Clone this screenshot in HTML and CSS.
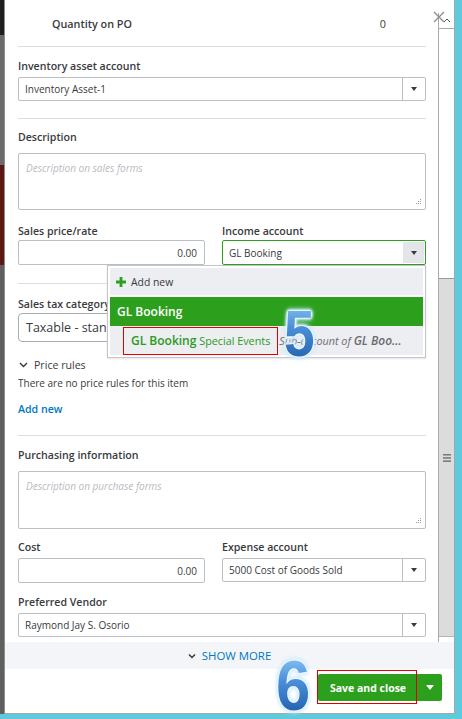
FILE: index.html
```html
<!DOCTYPE html>
<html>
<head>
<meta charset="utf-8">
<link rel="stylesheet" href="styles.css">
</head>
<body>
<div class="screen">
  <div class="main">
    <div class="bg-left">
      <div class="bl bl1"></div><div class="bl bl2"></div><div class="bl bl3"></div><div class="bl bl4"></div>
    </div>
    <div class="panel">
      <div class="scroller">
        <div class="form">
          <div class="qty"><span class="qty-label">Quantity on PO</span><span class="qty-val">0</span></div>

          <div class="sec sec-inv">
            <div class="label">Inventory asset account</div>
            <div class="select sel-inv"><span class="sel-text">Inventory Asset-1</span><span class="sel-arrow"><i class="caret"></i></span></div>
          </div>

          <div class="sec sec-desc">
            <div class="label">Description</div>
            <div class="textarea ta-sales"><span class="ph">Description on sales forms</span><svg class="grip" width="8" height="7" viewBox="0 0 8 7"><g fill="#9a9a9a"><rect x="6" y="0" width="1" height="1"/><rect x="4" y="2" width="1" height="1"/><rect x="6" y="2" width="1" height="1"/><rect x="2" y="4" width="1" height="1"/><rect x="4" y="4" width="1" height="1"/><rect x="6" y="4" width="1" height="1"/></g></svg></div>
            <div class="grid2 row-price">
              <div>
                <div class="label">Sales price/rate</div>
                <div class="input num">0.00</div>
              </div>
              <div>
                <div class="label">Income account</div>
                <div class="select sel-active"><span class="sel-text">GL Booking</span><span class="sel-arrow grey"><i class="caret"></i></span></div>
              </div>
            </div>
          </div>

          <div class="sec sec-tax">
            <div class="label">Sales tax category</div>
            <div class="taxsel">Taxable - standard rate</div>
            <div class="rules-head"><svg width="9" height="6" viewBox="0 0 9 6"><polyline points="1,1 4.5,4.5 8,1" fill="none" stroke="#393a3d" stroke-width="1.4"/></svg><span>Price rules</span></div>
            <div class="rules-none">There are no price rules for this item</div>
            <div class="link">Add new</div>
          </div>

          <div class="sec sec-purch">
            <div class="label">Purchasing information</div>
            <div class="textarea ta-purch"><span class="ph">Description on purchase forms</span><svg class="grip" width="8" height="7" viewBox="0 0 8 7"><g fill="#9a9a9a"><rect x="6" y="0" width="1" height="1"/><rect x="4" y="2" width="1" height="1"/><rect x="6" y="2" width="1" height="1"/><rect x="2" y="4" width="1" height="1"/><rect x="4" y="4" width="1" height="1"/><rect x="6" y="4" width="1" height="1"/></g></svg></div>
            <div class="grid2 row-cost">
              <div>
                <div class="label">Cost</div>
                <div class="input num">0.00</div>
              </div>
              <div>
                <div class="label">Expense account</div>
                <div class="select"><span class="sel-text">5000 Cost of Goods Sold</span><span class="sel-arrow"><i class="caret"></i></span></div>
              </div>
            </div>
            <div class="label lbl-vendor">Preferred Vendor</div>
            <div class="select"><span class="sel-text">Raymond Jay S. Osorio</span><span class="sel-arrow"><i class="caret"></i></span></div>
          </div>
        </div>
        <div class="scrollbar">
          <div class="sb-up"><svg width="8" height="5" viewBox="0 0 8 5"><polyline points="1,4 4,1 7,4" fill="none" stroke="#555" stroke-width="1"/></svg></div>
          <div class="sb-track"></div>
          <div class="sb-thumb"><svg width="8" height="8" viewBox="0 0 8 8"><g fill="#777"><rect x="0" y="0" width="8" height="1.5"/><rect x="0" y="3.2" width="8" height="1.5"/><rect x="0" y="6.4" width="8" height="1.5"/></g></svg></div>
        </div>
      </div>
      <div class="showmore"><svg width="8" height="6" viewBox="0 0 8 6"><polyline points="1,1.5 4,4.5 7,1.5" fill="none" stroke="#393a3d" stroke-width="1.5"/></svg><span>SHOW MORE</span></div>
      <div class="footer">
        <div class="btn-group"><span class="btn-main">Save and close</span><span class="btn-caret"><i class="caret white"></i></span></div>
      </div>

      <svg class="close-x" width="12" height="12" viewBox="0 0 12 12"><path d="M1 1 L11 11 M11 1 L1 11" stroke="#8f8f8f" stroke-width="1.4"/></svg>

      <div class="dropdown">
        <div class="dd-row dd-add"><svg width="10" height="10" viewBox="0 0 10 10"><path d="M3.6 0h2.8v3.6H10v2.8H6.4V10H3.6V6.4H0V3.6h3.6z" fill="#2ca01c"/></svg><span>Add new</span></div>
        <div class="dd-row dd-sel">GL Booking</div>
        <div class="dd-row dd-sub"><span class="sub-name"><b>GL Booking</b> Special Events</span><span class="sub-of">Sub-account of <b>GL Boo…</b></span></div>
      </div>
      <div class="redbox rb-sub"></div>
      <div class="redbox rb-save"></div>
      <div class="step step5">5</div>
    </div>
    <div class="bg-right"></div>
  </div>
  <div class="bg-bottom"></div>
  <div class="step step6">6</div>
</div>
</body>
</html>
```

FILE: styles.css
```css
* { box-sizing: border-box; }
html, body { margin: 0; padding: 0; }
body {
  width: 462px; height: 719px; overflow: hidden;
  background: #5ccbdb;
  font-family: "Open Sans", Lato, sans-serif;
  color: #393a3d;
}
.screen { position: relative; display: flex; flex-direction: column; height: 719px; }
.main { display: flex; height: 714px; }
.bg-left { width: 4px; display: flex; flex-direction: column; }
.bl1 { height: 35px; background: #1e1e1e; }
.bl2 { height: 130px; background: #6b6b6b; }
.bl3 { height: 100px; background: #5e1814; }
.bl4 { flex: 1; background: #5f5f5f; }
.bg-right { flex: 1; background: #5ccbdb; }
.bg-bottom { height: 5px; background: #5ccbdb; }

.panel {
  width: 451px; position: relative; background: #fff;
  border-left: 1px solid #8e8e8e; border-right: 1px solid #a6a6a6; border-bottom: 1px solid #a6a6a6;
  display: flex; flex-direction: column;
}
.scroller { display: flex; height: 642px; flex: none; }
.form { width: 433px; padding: 0 12px 0 13px; }

.qty {
  height: 47px; display: flex; justify-content: space-between; align-items: center;
  padding: 0 40px 0 34px; border-bottom: 1px solid #dcdde0; font-size: 10.8px;
}
.qty-label { font-weight: 600; }

.sec { border-bottom: 1px solid #dcdde0; }
.label { font-size: 10.6px; line-height: 14px; font-weight: 600; color: #393a3d; white-space: nowrap; }

.select, .input {
  height: 24px; border: 1px solid #babec5; border-radius: 2px;
  display: flex; align-items: center; font-size: 10px; background: #fff;
}
.input { height: 25px; }
.sel-text { flex: 1; padding-left: 6px; white-space: nowrap; overflow: hidden; }
.sel-arrow { width: 23px; align-self: stretch; border-left: 1px solid #babec5; display: flex; align-items: center; justify-content: center; }
.sel-arrow.grey { background: #e4e5e8; border-left: none; width: 21px; margin: 1px 1px 1px 0; }
.caret { display: block; width: 0; height: 0; border-left: 3px solid transparent; border-right: 3px solid transparent; border-top: 4px solid #393a3d; }
.caret.white { border-top-color: #fff; border-left-width: 4px; border-right-width: 4px; border-top-width: 5px; }
.sel-active { border-color: #2ca01c; height: 25px; }
.num { justify-content: flex-end; padding-right: 7px; }

.sec-inv { padding: 12px 0 17px; }
.sec-inv .label { margin-bottom: 4px; }

.sec-desc { padding: 11px 0 18px; }
.textarea {
  position: relative; height: 57px; border: 1px solid #babec5; border-radius: 2px;
  padding: 7px 7px; font-size: 10px;
}
.ph { color: #b8bbc1; font-style: italic; }
.grip { position: absolute; right: 3px; bottom: 3px; }
.ta-sales { margin-top: 9px; }
.grid2 { display: grid; grid-template-columns: 187px 204px; column-gap: 17px; }
.row-price { margin-top: 14px; }
.row-price .label { margin-bottom: 2px; }

.sec-tax { padding: 13px 0 19px; }
.sec-tax .label { margin-bottom: 2px; }
.taxsel {
  height: 29px; border: 1px solid #a9acb2; border-radius: 4px;
  font-size: 12.5px; display: flex; align-items: center; padding-left: 7px; white-space: nowrap;
}
.rules-head { margin-top: 16px; height: 14px; display: flex; align-items: center; font-size: 10.6px; gap: 6px; padding-left: 1px; }
.rules-none { margin-top: 4px; font-size: 10px; line-height: 14px; }
.link { margin-top: 12px; font-size: 10.6px; line-height: 14px; font-weight: 600; color: #0077c5; }

.sec-purch { padding: 12px 0 0; border-bottom: none; }
.ta-purch { margin-top: 9px; height: 58px; }
.row-cost { margin-top: 11px; }
.row-cost .label { margin-bottom: 4px; }
.lbl-vendor { margin-top: 12px; margin-bottom: 4px; }

.scrollbar {
  width: 16px; margin-top: 13px; border-left: 1px solid #a9a9a9;
  display: flex; flex-direction: column;
}
.sb-up { height: 16px; border-bottom: 1px solid #a9a9a9; display: flex; align-items: center; justify-content: center; }
.sb-track { height: 249px; }
.sb-thumb { height: 359px; background: #dcdcdc; border-top: 1px solid #9a9a9a; border-bottom: 1px solid #b5b5b5; display: flex; align-items: center; justify-content: center; }

.showmore {
  height: 27px; flex: none; background: #f4f5f8;
  display: flex; align-items: center; justify-content: center; gap: 6px;
  color: #0077c5; font-size: 11.4px;
}
.footer { flex: 1; display: flex; justify-content: flex-end; align-items: flex-start; padding: 5px 12px 0 0; }
.btn-group { display: flex; height: 27px; background: #2ca01c; border-radius: 2px; }
.btn-main { width: 100px; display: flex; align-items: center; justify-content: center; color: #fff; font-weight: 700; font-size: 10.5px; }
.btn-caret { width: 24px; display: flex; align-items: center; justify-content: center; }

.close-x { position: absolute; left: 428px; top: 11px; }

.dropdown {
  position: absolute; left: 102px; top: 265px; width: 319px; height: 93px;
  background: #fff; border: 1px solid #c3c5c9; padding: 2px;
  display: flex; flex-direction: column;
  box-shadow: 0 1px 2px rgba(0,0,0,0.1);
}
.dd-row { display: flex; align-items: center; white-space: nowrap; overflow: hidden; }
.dd-add { height: 27px; background: #eceef1; padding-left: 6px; gap: 5px; font-size: 10.4px; }
.dd-sel { height: 29px; margin-top: 2px; background: #2ca01c; color: #fff; font-weight: 600; font-size: 12px; padding-left: 7px; }
.dd-sub { height: 29px; background: #eceef1; padding-left: 21px; }
.sub-name { color: #2a9a1b; font-size: 10.8px; }
.sub-name b { font-size: 12px; font-weight: 600; }
.sub-of { margin-left: 9px; color: #6b6c72; font-style: italic; font-size: 10.8px; }
.sub-of b { font-size: 12px; font-weight: 600; }

.redbox { position: absolute; border: 1px solid #e00000; }
.rb-sub { left: 118px; top: 327px; width: 155px; height: 28px; }
.rb-save { left: 312px; top: 670px; width: 100px; height: 34px; }

.step {
  position: absolute; font-family: "Liberation Sans", Arial, sans-serif; font-weight: 700;
  background: linear-gradient(180deg, #86c3f2 0%, #4a8fd8 40%, #1d5ca8 100%);
  -webkit-background-clip: text; background-clip: text; color: transparent;
  filter: drop-shadow(0 0 1px #fff) drop-shadow(0 0 1px #fff) drop-shadow(0 0 1.5px #c4e6ff) drop-shadow(0 0 2px #c4e6ff);
  transform-origin: left top; line-height: 1;
}
.step5 { left: 279px; top: 302px; font-size: 64px; transform: scaleX(0.86); }
.step6 { left: 276px; top: 657px; font-size: 70px; line-height: 0.85; transform: scaleX(0.88); }
```
